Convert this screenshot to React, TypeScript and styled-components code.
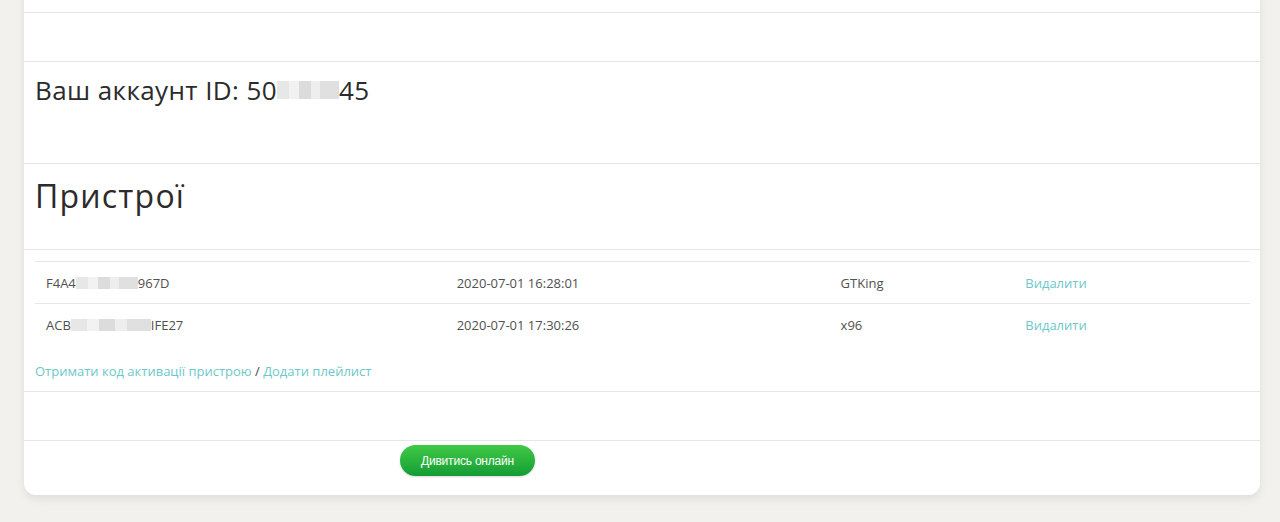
import styled, { createGlobalStyle } from "styled-components";

const GlobalStyle = createGlobalStyle`
    html, body {
        margin: 0;
        padding: 0;
        background: #f2f1ee;
        font-family: "Open Sans", "Noto Sans", sans-serif;
        color: #333;
        overflow: hidden;
    }
`

const Page = styled.div`
    padding: 0 20px 28px 24px;
`

const Card = styled.div`
    margin-top: -39px;
    background: #fff;
    border-radius: 12px;
    box-shadow: 0 4px 8px rgba(0, 0, 0, 0.08);
    overflow: hidden;
`

const Section = styled.div<{ $height: number }>`
    height: ${(props) => props.$height}px;
    box-sizing: border-box;
    border-bottom: 1px solid #e6e6e6;
    &:last-child {
        border-bottom: none;
    }
`

const AccountTitle = styled.h3`
    margin: 0;
    padding: 10px 11px 0;
    font-size: 26px;
    letter-spacing: 0.4px;
    font-weight: 400;
    color: #2b2b2b;
    display: flex;
    align-items: center;
`

const DevicesTitle = styled.h2`
    margin: 0;
    padding: 10px 11px 0;
    font-size: 32px;
    letter-spacing: 1.2px;
    font-weight: 400;
    color: #2b2b2b;
`

// pixelated block hiding part of an id
const Masked = styled.span<{ $w: number; $h: number }>`
    display: inline-block;
    width: ${(props) => props.$w}px;
    height: ${(props) => props.$h}px;
    background:
        linear-gradient(90deg, #e4e4e4 0 20%, #f0f0f0 20% 35%, #d8d8d8 35% 55%, #ececec 55% 70%, #dcdcdc 70% 100%);
    opacity: 0.9;
`

const DevicesBody = styled.div`
    padding: 11px 10px 0 11px;
`

const Table = styled.table`
    width: 100%;
    border-collapse: collapse;
    font-size: 13px;
    color: #505050;
    td {
        border-top: 1px solid #e6e6e6;
        padding: 0 11px;
        height: 41px;
        vertical-align: middle;
    }
`

const Cell = styled.td<{ $width: string }>`
    width: ${(props) => props.$width};
`

const Id = styled.span`
    display: inline-flex;
    align-items: center;
`

const LinkText = styled.a`
    color: #6cc8ca;
    text-decoration: none;
    cursor: pointer;
`

const Actions = styled.div`
    margin-top: 17px;
    font-size: 13px;
    color: #444;
`

const Footer = styled.div`
    height: 54px;
    padding-top: 4px;
    box-sizing: border-box;
    padding-left: 376px;
`

const WatchButton = styled.button`
    width: 135px;
    height: 31px;
    border: none;
    border-radius: 16px;
    background: linear-gradient(180deg, #41c847 0%, #26b03b 60%, #149a37 100%);
    box-shadow: 0 1px 2px rgba(0, 0, 0, 0.15);
    color: #fff;
    font-family: "Liberation Sans Narrow", "Liberation Sans", sans-serif;
    font-stretch: condensed;
    font-size: 12px;
    letter-spacing: -0.2px;
    cursor: pointer;
`

const devices = [
    { pre: "F4A4", hidden: 62, post: "967D", date: "2020-07-01 16:28:01", model: "GTKing" },
    { pre: "ACB", hidden: 80, post: "IFE27", date: "2020-07-01 17:30:26", model: "x96" },
]

const App = () => {
    return (
        <>
            <GlobalStyle />
            <Page>
                <Card>
                    <Section $height={52} />
                    <Section $height={49} />
                    <Section $height={102}>
                        <AccountTitle>
                            Ваш аккаунт ID: 50<Masked $w={62} $h={18} />45
                        </AccountTitle>
                    </Section>
                    <Section $height={86}>
                        <DevicesTitle>Пристрої</DevicesTitle>
                    </Section>
                    <Section $height={142}>
                        <DevicesBody>
                            <Table>
                                <tbody>
                                    {devices.map((d) => (
                                        <tr key={d.pre}>
                                            <Cell $width="33.8%">
                                                <Id>
                                                    {d.pre}
                                                    <Masked $w={d.hidden} $h={12} />
                                                    {d.post}
                                                </Id>
                                            </Cell>
                                            <Cell $width="31.6%">{d.date}</Cell>
                                            <Cell $width="15.2%">{d.model}</Cell>
                                            <Cell $width="19.4%">
                                                <LinkText>Видалити</LinkText>
                                            </Cell>
                                        </tr>
                                    ))}
                                </tbody>
                            </Table>
                            <Actions>
                                <LinkText>Отримати код активації пристрою</LinkText> / <LinkText>Додати плейлист</LinkText>
                            </Actions>
                        </DevicesBody>
                    </Section>
                    <Section $height={49} />
                    <Footer>
                        <WatchButton>Дивитись онлайн</WatchButton>
                    </Footer>
                </Card>
            </Page>
        </>
    )
}

export default App;
